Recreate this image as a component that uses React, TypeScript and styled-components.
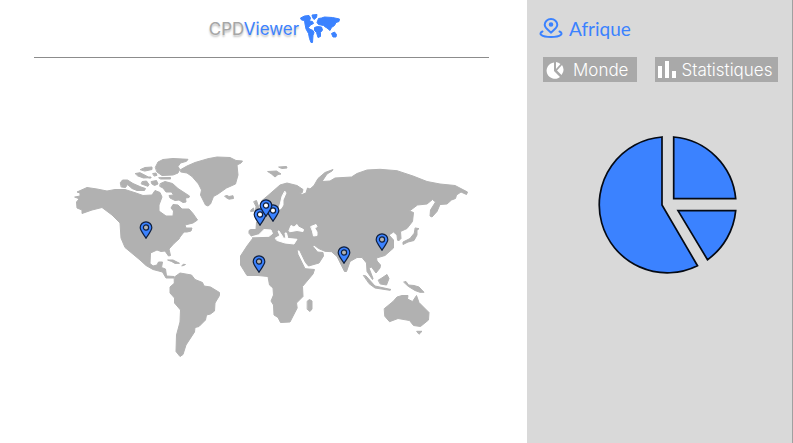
import React from "react";
import styled, { createGlobalStyle } from "styled-components";

const GlobalStyle = createGlobalStyle`
  * { box-sizing: border-box; }
  body { margin: 0; background: #fff; font-family: Inter, "Liberation Sans", sans-serif; }
`;

const BLUE = "#3b82ff";
const LAND = "#b1b1b1";

const Page = styled.div`
  display: grid;
  grid-template-columns: minmax(0, 1fr) 266px;
  min-height: 100vh;
`;

const Main = styled.main`
  padding: 0 38px 0 34px;
`;

const Header = styled.header`
  display: flex;
  justify-content: center;
  align-items: center;
  gap: 1px;
  height: 58px;
  padding-left: 26px;
  border-bottom: 1px solid #8c8c8c;
`;

const Brand = styled.h1`
  margin: 0;
  font-size: 17px;
  line-height: 24px;
  font-weight: 400;
  color: #a6a6a6;
  text-shadow: 0 2px 2px rgba(0, 0, 0, 0.25);
`;

const BrandAccent = styled.span`
  color: ${BLUE};
`;

const LogoMap = styled.svg`
  width: 40px;
  height: 30px;
  fill: ${BLUE};
  stroke: ${BLUE};
  stroke-width: 1;
  stroke-linejoin: round;
`;

const MapArea = styled.section`
  position: relative;
  margin-top: 82px;
`;

const MapDrawing = styled.svg`
  display: block;
  width: 100%;
  stroke-width: 1;
  stroke-linejoin: round;
  stroke-linecap: round;
`;

const PinButton = styled.button<{ $x: number; $y: number }>`
  position: absolute;
  left: ${(p) => (p.$x / 455) * 100}%;
  top: ${(p) => (p.$y / 230) * 100}%;
  width: 14px;
  height: 18px;
  margin: -18px 0 0 -7px;
  padding: 0;
  border: 0;
  background: none;
  cursor: pointer;
`;

const PinDrawing = styled.svg`
  display: block;
  width: 14px;
  height: 18px;
`;

const Sidebar = styled.aside`
  padding: 16px 14px 0 12px;
  background: #d9d9d9;
  border-right: 1px solid #a0a0a0;
`;

const RegionTitle = styled.h2`
  display: flex;
  align-items: center;
  gap: 6px;
  margin: 0;
  height: 24px;
  font-family: Lato, Inter, sans-serif;
  font-size: 19px;
  font-weight: 400;
  color: ${BLUE};
`;

const RegionIcon = styled.svg`
  width: 24px;
  height: 22px;
  fill: none;
  stroke: ${BLUE};
  stroke-width: 2;
  stroke-linecap: round;
`;

const Tabs = styled.nav`
  display: flex;
  gap: 18px;
  margin: 17px 0 0 4px;
`;

const TabButton = styled.button<{ $gap: number; $pad: number }>`
  display: flex;
  align-items: center;
  gap: ${(p) => p.$gap}px;
  height: 25px;
  padding: 0 ${(p) => p.$pad}px 0 3px;
  border: 0;
  background: #a9a9a9;
  color: #fff;
  font-family: inherit;
  font-size: 17px;
  font-weight: 300;
  cursor: pointer;
`;

const TabIcon = styled.svg`
  width: 18px;
  height: 20px;
  fill: #fff;
`;

const PieChart = styled.svg`
  display: block;
  width: 140px;
  height: 140px;
  margin: 53px 40px 0 auto;
  fill: ${BLUE};
  stroke: #050a14;
  stroke-width: 1.7;
`;

const land: string[] = [
  // North and Central America
  "75,197 80,196 80,193 77,192 87,187.500 97,189 107,191 115,189.500 125,189.500 136,193 143,195.500 152,195 155,190.500 160,192.500 162,197 159,205 159,211 166,216 173,216 173.500,211 171,208 173,204.500 178,205 182,209 189,209 193,213.500 197.500,220 193,223 185,225 186,228 192,228 191,231 187,232 184,232 180,237 179,239 174,243.500 169,249 170.500,255.500 168.500,256 165,251 161,251.500 157,250 150.500,253 150,263.500 153,266 157,265 158.500,262 162.500,262 161.500,267.500 165.500,269 166.500,276 174,276.500 174,278 166,278 162.500,272 153,269.500 146,265.500 140,260 134,255 125,247.500 121,238 120,223 112,215 102,207.500 92,210 82,213.500 82,210 77,208 76.500,202 79,199",
  // South America
  "174.500,277 180,273 191.500,275 195,279.500 202.500,282.500 204,286 210.500,287 219.500,292.500 219.500,295.500 215,303 214.500,311 210.500,314 206.500,315 205.500,320 199,326.500 195,327.500 194.500,332 186,345 183,354.500 180,356.500 176,351.500 176.500,335 180,322 180.500,310 174.500,303 174.500,298 170,293 170,287 174,283.500",
  "168,260 173,260 179.500,263.300 175,263.400 172,261.700",
  "182,265.500 183.500,264.300 185.500,264.500 183.500,265.500",
  // Greenland and Iceland
  "180,170 187,166 195,162.500 208,158.700 217,157 230,157.500 236,160.500 242.500,161 241,163 237,165 238,175 235.500,184 226.500,188 218,194 213.500,196.500 210.500,204 208,206 205.500,205 200.500,195 201.500,190 198.500,184 192,176.500 187,173 181,172",
  "225,196 227,195.500 229,196.500 233,195.700 233.500,198.500 229,199.200 226,197.500",
  // Arctic islands
  "155.500,167 158,162 163,159.500 173,158.500 188,159.300 186.500,161.300 180.500,163 178,166.500 179.500,169 178,173 173,175 162,175.500 157,172",
  "159,177.700 170.500,177.500 170.500,179 161,179",
  "160.500,183.500 165,181.500 172.500,183.500 178,188.500 189.500,196 189,197.500 185.500,198 186,202 183,202.500 179,200 175,200.500 170,198 169,195.500 173.500,195 171.500,192 166,192 163,188 160,186.500",
  "120.500,182.500 122.500,180 127.500,180 133,183.500 141,187 145.500,188.500 144.500,190.500 137,190.500 132,188.500 127.500,184.500 125.500,187.500 121.500,187",
  "135.500,173.500 140,172.700 146.500,176 149.500,177.700 143.500,178 138,176",
  "140.500,169.500 145,167.500 152,167 152,169.500 145,171",
  "142.500,181.500 146.500,181 149,184.500 148,186.300 141.500,184",
  "151.500,181.500 156.500,180.500 158,184 154.500,185.500 152,184",
  "149,177 151,177 151,178 149,178",
  "153,173.500 156,173 157,175.300 154.500,176",
  // Europe, Asia and Africa
  "249,233 249,230.500 250.500,229.500 256,229.500 256.500,222 261,219 268,211 266,206 261.500,203 262,200.500 268,195.500 280,185 287,183 297,185.500 303,189.500 302,193 298,192 302,194.500 306,193 307.500,188 310,189 314,185.500 318,178.500 325,172.500 333,169.500 332,171 327,174 322,181.500 330,181 335,178 351.500,177 357,173.500 367,170 380,169.300 397,170.700 413,176 427,181.500 440,184 455,185.500 467.500,192 466.500,194.500 461,192 456.500,195 455.500,198.500 451.500,200 447,204 440,204.500 437,211.500 432,217 430,216 430.500,210 435.500,202 432.500,199.500 427,204 417.500,205 409.500,211 413.500,212.500 412.500,221.500 407,228.500 400.500,231.500 401,238.500 398.500,241 397.500,240 397,235 393.500,232 389,235 393.500,240 393.500,248 385,255.500 376.500,258 377,261 380.500,265 380,268 376,273 371.500,267 369,268 373,278.500 372.500,279.500 367,271.500 366.500,263 362,257.500 357,257.500 350,261.500 346.500,271.500 344.500,271.500 337,256.500 331.500,251.700 325,251.300 318.500,248.500 314,245 313,246.500 317.500,252 323,252.500 323.500,256 319,263 308.500,266 305.500,262.500 299.500,250 297,250 298,254.500 305,268.700 314.500,269.500 313,274 302.500,286.500 303,296.500 296.500,303 297.200,308 290,322 280.500,322.500 278,317.500 274,315 273.500,305 271,301 273.500,295 273,288 269.500,285 268,276.500 258,275.500 247,275.500 240.500,265 240.500,256 247,246 253,238 250,234.500",
  // British Isles
  "254,201.500 256.500,200.500 258,205 260,210 255,212.500 256,207",
  "251,210 253.500,208 254,211 251,211.500",
  // Svalbard
  "268,171.500 276.500,171 281,174 278,174.500 275,177 271.500,174",
  "279,167 286.500,166.500 287,168 282,168.500",
  // Madagascar
  "307.500,301 309.500,299.500 312,301 312,309 310,311.500 307.500,309.500",
  // Japan
  "415.500,228 419,228.700 417,230 417,235 414,240.500 408,242 403,244.500 403,242 410,238.500 414,233.500",
  // South-east Asia and Oceania
  "363.700,275.500 366,276 375,286 391,289.500 390,290.300 375,288 369.500,284",
  "378.500,280 381,278.500 387,274.500 389,278.500 386.500,285 380.500,284",
  "404,282 406,281.500 408.500,285 414,285.500 419,287 424,292.300 420,292.300 415,290.500 408.500,286.500",
  "384.500,308.500 393,301.500 397,297 402,295.500 408,295.500 407.500,299 412.500,301.500 416.500,295.500 419,302.500 429,312.500 428.500,320 420.500,326.500 413.500,325.500 409.500,320.500 398,318.500 389.500,321.700 385,316.500",
  "417,331.300 422,331.300 419.300,334",
];

const seas: string[] = [
  // Mediterranean
  "252,236.800 269,236.300 272.500,233.500 271,230 264,229.500 259,234.500",
  "275.500,238 280,235.500 283.500,238 297,239.300 294,244 285,243 277,240.500",
  "280,236 278,231 279,231 283,237",
  "286,239 285,233 286.500,233 288,239",
  // Black Sea and Caspian Sea
  "289,230.500 291,225.500 294,227 297,224.500 298.500,227 303.500,229.500 303,231.500 297,230.500 290,231.700",
  "311,226.500 316,224.500 317,226.500 315,228.500 317,232 317,235.500 313.500,236 312.500,231.500",
  // Baltic and North Sea
  "285,191.500 286,193 283,200 283,205 281,208.500 277,210 270,213 279,208 280.500,203 282,196.500",
];

const pins = [
  { name: "États-Unis", x: 112, y: 99, hole: LAND },
  { name: "Afrique", x: 225, y: 133, hole: LAND },
  { name: "France", x: 226, y: 86, hole: "#fff" },
  { name: "Allemagne", x: 239, y: 82, hole: "#fff" },
  { name: "Royaume-Uni", x: 232, y: 77, hole: "#fff" },
  { name: "Inde", x: 310, y: 124, hole: LAND },
  { name: "Chine", x: 348, y: 111, hole: LAND },
];

function Pin({ name, x, y, hole }: (typeof pins)[number]) {
  return (
    <PinButton $x={x} $y={y} aria-label={name}>
      <PinDrawing viewBox="0 0 14 18">
        <path
          d="M7 17.200C5.500 14.200 1.200 10 1.200 6.600a5.800 5.800 0 0 1 11.600 0C12.800 10 8.500 14.200 7 17.200Z"
          fill={BLUE}
          stroke="#10203f"
          strokeWidth="1.200"
        />
        <circle cx="7" cy="6.500" r="2.600" fill={hole} stroke="#10203f" strokeWidth="1.200" />
      </PinDrawing>
    </PinButton>
  );
}

export default function App() {
  return (
    <>
      <GlobalStyle />
      <Page>
        <Main>
          <Header>
            <Brand>
              CPD<BrandAccent>Viewer</BrandAccent>
            </Brand>
            <LogoMap viewBox="300 14 40 30" aria-hidden="true">
              <path d="M300.500 18l4-2 4.500-.5 1.500 2.500-1 3 3 .5 1 2-3 1.500-2 2.500 1 1.500 3.500 1.500 1 2-1 3-.5 7h-1.500l-1.500-4-1-5-2.500-4.500-1-5-.5-3.500-3-.5z" />
              <path d="M312 15l5-.5-.5 3-2.500 2-1.500-2z" />
              <path d="M317 22.500l1.500-4 3-.5 3-1 8 .5 7 1.500-.5 2.500-3 1-1.500 3-3 2-1.500 3-3-2.500-2.500-1.500-1-1-5-1z" />
              <path d="M314.500 27.500l3-1 4 .5 1 3-2 2.500 0 4-2.500 1-1.500-5-2-2z" />
              <path d="M331.500 33.500l3-1.500 2 2.500-.5 2.500-3 0z" />
            </LogoMap>
          </Header>
          <MapArea>
            <MapDrawing viewBox="34 140 455 230" role="img" aria-label="Carte du monde">
              <g fill={LAND} stroke={LAND}>
                {land.map((points) => (
                  <polygon key={points} points={points} />
                ))}
              </g>
              <g fill="#fff" stroke="#fff">
                {seas.map((points) => (
                  <polygon key={points} points={points} />
                ))}
              </g>
            </MapDrawing>
            {pins.map((pin) => (
              <Pin key={pin.name} {...pin} />
            ))}
          </MapArea>
        </Main>
        <Sidebar>
          <RegionTitle>
            <RegionIcon viewBox="0 0 24 22" aria-hidden="true">
              <path d="M12 15.500C10 13.500 5.700 11 5.700 7.700a6.300 5.700 0 0 1 12.600 0C18.300 11 14 13.500 12 15.500Z" />
              <circle cx="12" cy="7.500" r="1.300" fill={BLUE} />
              <path d="M3.500 14.500C-1 16.500 2 20 12 20s13-3.500 8.500-5.500" />
            </RegionIcon>
            Afrique
          </RegionTitle>
          <Tabs>
            <TabButton $gap={9} $pad={9}>
              <TabIcon viewBox="0 0 18 20" aria-hidden="true">
                <path d="M8 2.500V11l6 6A8.200 8.200 0 1 1 8 2.500Z" />
                <path d="M10 2v7l4.500-5A8 8 0 0 0 10 2Z" />
                <path d="M16 5l-5 5.500 4.500 4.500A8.500 8.500 0 0 0 16 5Z" />
              </TabIcon>
              Monde
            </TabButton>
            <TabButton $gap={5} $pad={6}>
              <TabIcon viewBox="0 0 18 20" aria-hidden="true">
                <path d="M0 6h4v12H0zM7 1h4v17H7zM14 11h4v7h-4z" />
              </TabIcon>
              Statistiques
            </TabButton>
          </Tabs>
          <PieChart viewBox="598 135 140 140" role="img" aria-label="Répartition">
            <path d="M662 137V205L697.500 265.700A68 68 0 1 1 662 137Z" />
            <path d="M673.700 137V198.700H735.700A68 68 0 0 0 673.700 137Z" />
            <path d="M678 210.700H735.700A68 68 0 0 1 707.500 259.700Z" />
          </PieChart>
        </Sidebar>
      </Page>
    </>
  );
}
